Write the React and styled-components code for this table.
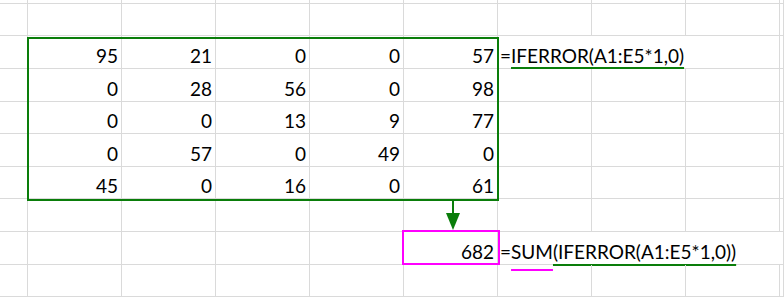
import React from "react";
import styled, { createGlobalStyle } from "styled-components";

const GREEN = "#0a7d0a";
const PINK = "#ff00ff";
const GRID = "#dadada";

const Global = createGlobalStyle`
  html, body { margin: 0; padding: 0; background: #fff; }
  body { font-family: Lato, "Open Sans", sans-serif; overflow: hidden; }
`;

const Sheet = styled.div`
  position: relative;
  width: 784px;
  height: 297px;
  overflow: hidden;
`;

const Grid = styled.div`
  display: grid;
  grid-template-columns: 28px repeat(8, 94px) 4px;
  grid-template-rows: 4px 32px 33px 33px 32px 33px 32px 33px 33px 32px;
`;

const Cell = styled.div`
  box-sizing: border-box;
  border-right: 1px solid ${GRID};
  border-bottom: 1px solid ${GRID};
  display: flex;
  align-items: flex-end;
  justify-content: ${(p) => (p.$left ? "flex-start" : "flex-end")};
  padding: ${(p) => (p.$left ? "0 0 1px 2px" : "0 3px 1px 0")};
  font-size: 19px;
  line-height: 23px;
  color: #000;
  white-space: nowrap;
  grid-column: ${(p) => (p.$span ? `span ${p.$span}` : "auto")};
`;

const Mark = styled.span`
  text-decoration: underline;
  text-decoration-color: ${(p) => p.$color};
  text-decoration-thickness: 2px;
  text-underline-offset: ${(p) => p.$offset}px;
  text-decoration-skip-ink: none;
`;

const RangeBox = styled.div`
  position: absolute;
  left: ${(p) => p.$x}px;
  top: ${(p) => p.$y}px;
  width: ${(p) => p.$w}px;
  height: ${(p) => p.$h}px;
  box-sizing: border-box;
  border: 2px solid ${(p) => p.$color};
  pointer-events: none;
`;

const Arrow = styled.svg`
  position: absolute;
  left: 446px;
  top: 200px;
`;

const data = [
  [95, 21, 0, 0, 57],
  [0, 28, 56, 0, 98],
  [0, 0, 13, 9, 77],
  [0, 57, 0, 49, 0],
  [45, 0, 16, 0, 61],
];

function EmptyRow({ n = 10 }) {
  return Array.from({ length: n }, (_, i) => <Cell key={i} />);
}

export default function App() {
  const rows = [];
  // partial top row
  rows.push(<EmptyRow key="r0" />);
  rows.push(<EmptyRow key="r1" />);
  data.forEach((r, ri) => {
    const cells = [<Cell key="a" />];
    r.forEach((v, ci) => cells.push(<Cell key={ci}>{v}</Cell>));
    if (ri === 0) {
      cells.push(
        <Cell key="f" $left $span={3}>
          =<Mark $color={GREEN} $offset={4}>IFERROR(A1:E5*1,0)</Mark>
        </Cell>
      );
      cells.push(<Cell key="z" />);
    } else {
      for (let k = 0; k < 4; k++) cells.push(<Cell key={"e" + k} />);
    }
    rows.push(<React.Fragment key={"d" + ri}>{cells}</React.Fragment>);
  });
  rows.push(<EmptyRow key="r7" />);
  rows.push(
    <React.Fragment key="r8">
      {Array.from({ length: 5 }, (_, i) => <Cell key={i} />)}
      <Cell>682</Cell>
      <Cell $left $span={4}>
        =<Mark $color={PINK} $offset={10}>SUM</Mark>
        <Mark $color={GREEN} $offset={5}>(IFERROR(A1:E5*1,0))</Mark>
      </Cell>
    </React.Fragment>
  );
  rows.push(<EmptyRow key="r9" />);

  return (
    <>
      <Global />
      <Sheet>
        <Grid>{rows}</Grid>
        <RangeBox $x={27} $y={37} $w={472} $h={164} $color={GREEN} />
        <RangeBox $x={402} $y={230} $w={98} $h={35} $color={PINK} />
        <Arrow width="14" height="31" viewBox="0 0 14 31">
          <rect x="6" y="0" width="2" height="14" fill={GREEN} />
          <polygon points="0,13 14,13 7,30" fill={GREEN} />
        </Arrow>
      </Sheet>
    </>
  );
}
